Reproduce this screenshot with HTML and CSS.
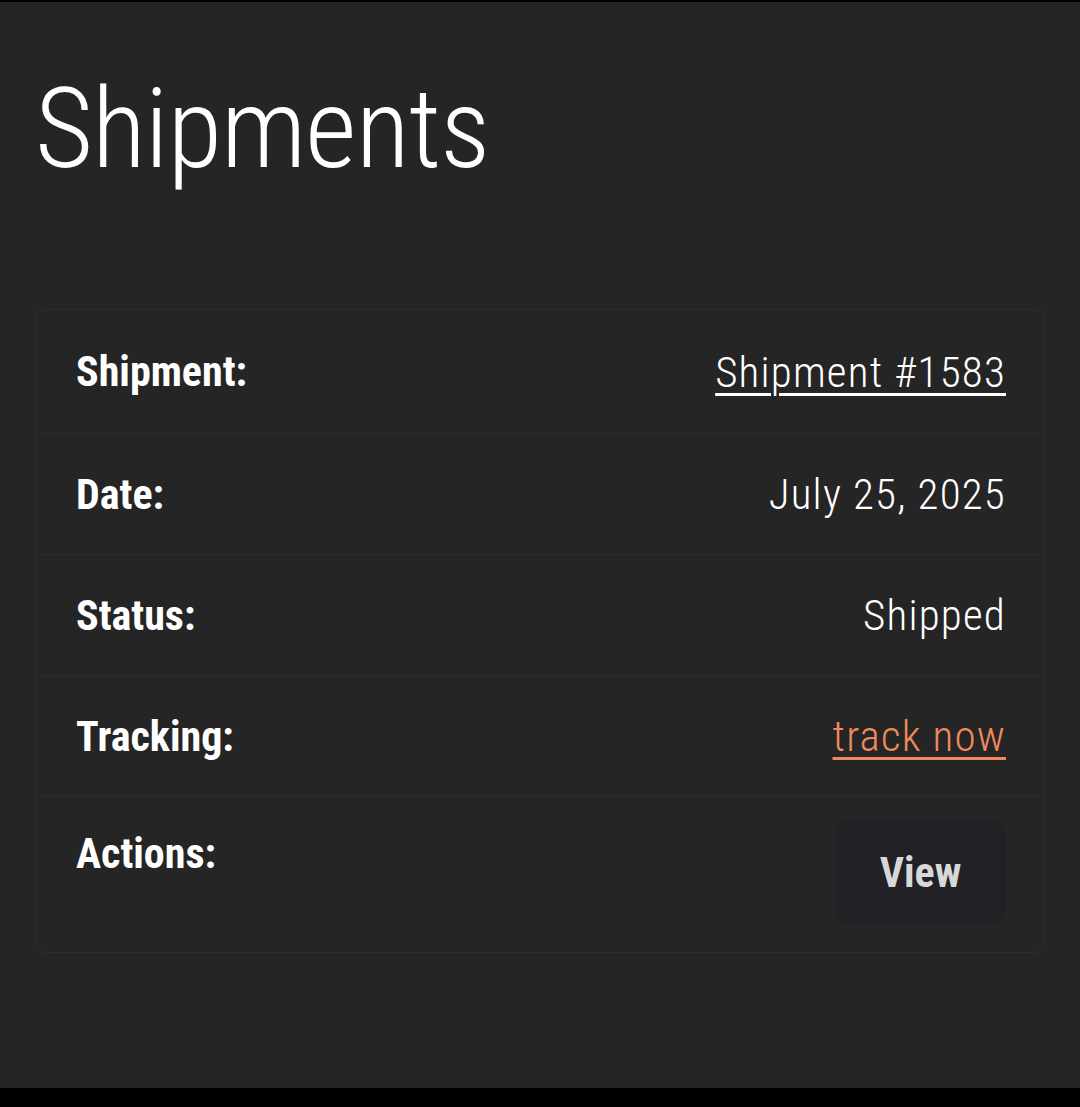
FILE: index.html
```html
<!DOCTYPE html>
<html lang="en">
<head>
  <meta charset="UTF-8">
  <meta name="viewport" content="width=device-width, initial-scale=1.0">
  <title>Shipments</title>
  <link rel="stylesheet" href="styles.css">
</head>
<body>
  <div class="screen">
    <h1 class="title">Shipments</h1>

    <div class="card">
      <div class="row">
        <span class="label">Shipment:</span>
        <a class="value link" href="#">Shipment #1583</a>
      </div>
      <div class="row">
        <span class="label">Date:</span>
        <span class="value">July 25, 2025</span>
      </div>
      <div class="row">
        <span class="label">Status:</span>
        <span class="value">Shipped</span>
      </div>
      <div class="row">
        <span class="label">Tracking:</span>
        <a class="value link accent" href="#">track now</a>
      </div>
      <div class="row row-actions">
        <span class="label">Actions:</span>
        <button class="btn-view">View</button>
      </div>
    </div>
  </div>
</body>
</html>
```

FILE: styles.css
```css
html, body {
  margin: 0;
  padding: 0;
  background: #000;
}
body {
  font-family: "Liberation Sans Narrow", "Roboto Condensed", Roboto, "Liberation Sans", sans-serif;
  color: #fff;
}
.screen {
  margin-top: 2px;
  height: 1086px;
  background: #252525;
  padding: 0 35px;
  box-sizing: border-box;
  overflow: hidden;
}
.title {
  margin: 0;
  padding: 62px 0 0 0;
  font-size: 112px;
  font-weight: 300;
  line-height: 130px;
  letter-spacing: -1px;
  height: 307px;
  box-sizing: border-box;
}
.card {
  border: 1px solid #2d2d2d;
  border-radius: 10px;
  padding: 0 3px;
}
.row {
  display: flex;
  justify-content: space-between;
  align-items: center;
  height: 120px;
  padding: 0 35px 0 37px;
  border-bottom: 1px solid #2d2d2d;
}
.row:first-child {
  height: 123px;
}
.label {
  font-size: 42px;
  font-weight: 700;
}
.value {
  font-size: 43px;
  font-weight: 300;
  letter-spacing: 1.2px;
  color: #fff;
}
.link {
  text-decoration: underline;
  text-underline-offset: 6px;
  text-decoration-thickness: 3px;
}
.accent {
  color: #ef8a5c;
}
.row-actions {
  height: auto;
  align-items: flex-start;
  padding-top: 25px;
  padding-bottom: 30px;
  border-bottom: none;
}
.row-actions .label {
  line-height: 64px;
}
.btn-view {
  width: 171px;
  height: 100px;
  border: none;
  border-radius: 8px;
  background: #222126;
  color: #d8d8d8;
  font-family: inherit;
  font-size: 42px;
  font-weight: 700;
}
```
